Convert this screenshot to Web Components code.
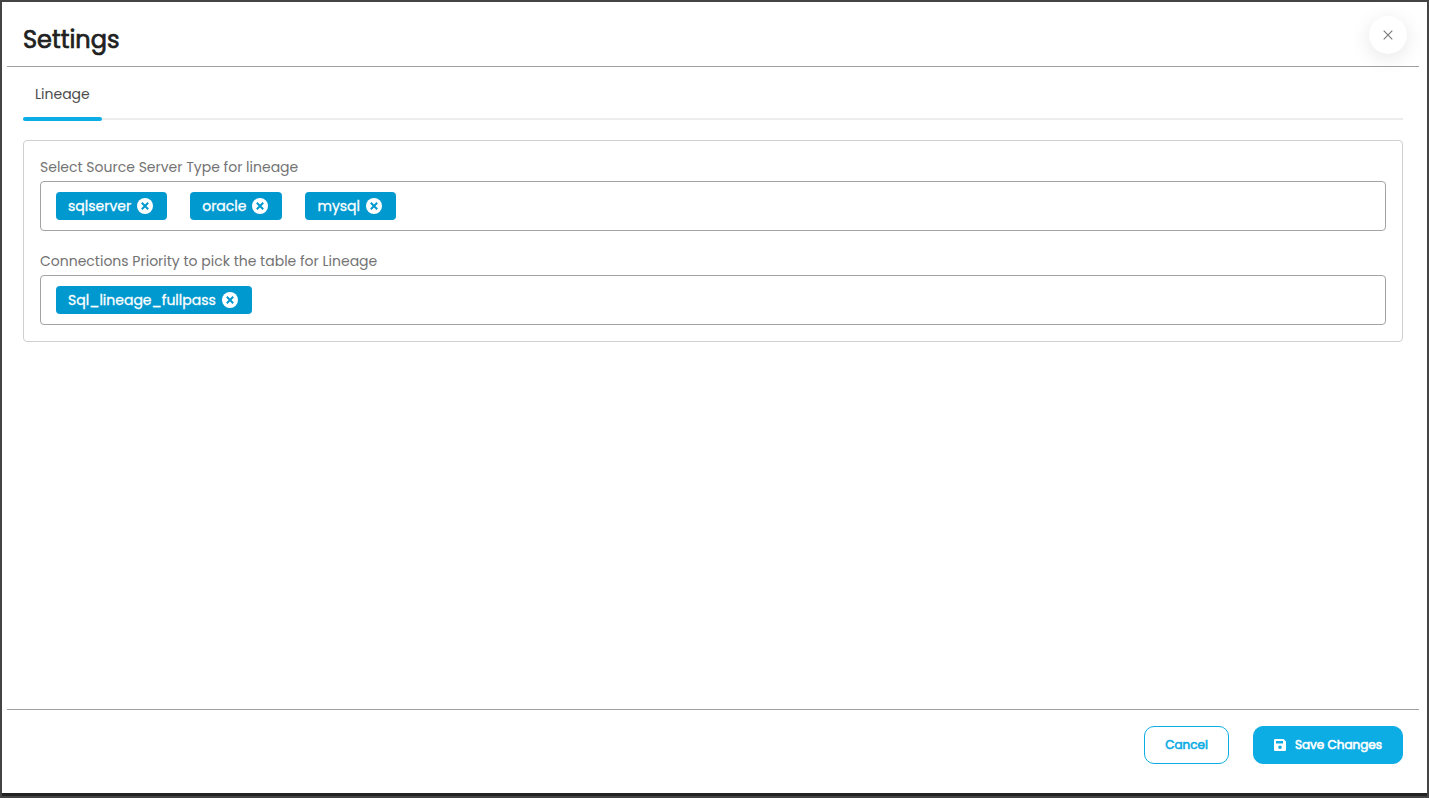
<!DOCTYPE html>
<html lang="en">
<head>
<meta charset="utf-8">
<meta name="viewport" content="width=device-width, initial-scale=1">
<title>Settings</title>
<style>
  html { background: #444; }
  body { margin: 0; font-family: Poppins, Inter, sans-serif; font-size: 14px; line-height: 20px; color: #212121; }
</style>
</head>
<body>
<settings-dialog>
  <span slot="title">Settings</span>
  <settings-tab slot="tabs">Lineage</settings-tab>
  <settings-card>
    <chip-field label="Select Source Server Type for lineage">
      <value-chip>sqlserver</value-chip>
      <value-chip>oracle</value-chip>
      <value-chip>mysql</value-chip>
    </chip-field>
    <chip-field label="Connections Priority to pick the table for Lineage">
      <value-chip>Sql_lineage_fullpass</value-chip>
    </chip-field>
  </settings-card>
  <action-button slot="actions" variant="outline">Cancel</action-button>
  <action-button slot="actions" variant="solid">
    <svg slot="icon" width="12" height="12" viewBox="0 0 12 12" aria-hidden="true"><path fill="currentColor" fill-rule="evenodd" d="M1.3 0H9.500l2.500 2.500v8.200A1.3 1.3 0 0 1 10.700 12H1.300A1.3 1.3 0 0 1 0 10.700V1.300A1.3 1.3 0 0 1 1.300 0ZM2 2v2.500h7V2ZM6 6.400a1.800 1.800 0 1 0 0 3.600 1.800 1.800 0 0 0 0-3.600Z"/></svg>
    Save Changes
  </action-button>
</settings-dialog>

<script>
  const define = (name, html, setup) => {
    const template = document.createElement('template');
    template.innerHTML = html;
    customElements.define(name, class extends HTMLElement {
      constructor() {
        super();
        this.attachShadow({ mode: 'open' }).append(template.content.cloneNode(true));
      }
      connectedCallback() {
        if (setup) setup(this, this.shadowRoot);
      }
    });
  };

  define('settings-dialog', `
    <style>
      :host { display: flex; box-sizing: border-box; min-height: 100vh; border: 2px solid #444; background: #222; padding-bottom: 3px; }
      section { flex: 1; min-width: 0; display: flex; flex-direction: column; background: #fff; padding: 0 8px 0 5px; }
      header { display: flex; justify-content: space-between; align-items: center; padding: 14px 12px 12px 16px; border-bottom: 1px solid #a0a0a0; }
      h1 { margin: 0; padding-top: 10px; font-size: 24px; line-height: 28px; font-weight: 400; -webkit-text-stroke: .03em; }
      .close { width: 38px; height: 38px; padding: 0; border: 0; border-radius: 50%; background: #fff; color: #777; display: grid; place-items: center; box-shadow: 0 4px 20px rgba(0, 0, 0, .1); cursor: pointer; }
      main { flex: 1; padding: 0 16px; }
      nav { position: relative; display: flex; margin-bottom: 19px; }
      nav::before { content: ""; position: absolute; left: 0; right: 0; bottom: 1px; height: 2px; background: #ececec; }
      footer { display: flex; justify-content: flex-end; gap: 24px; padding: 16px 16px 29px; border-top: 1px solid #a0a0a0; }
    </style>
    <section role="dialog" aria-labelledby="title">
      <header>
        <h1 id="title"><slot name="title"></slot></h1>
        <button class="close" type="button" aria-label="Close">
          <svg width="10" height="10" viewBox="0 0 10 10" fill="none" stroke="currentColor" stroke-width="1.1"><path d="M.7.7l8.600 8.600M9.300.7L.7 9.300"/></svg>
        </button>
      </header>
      <main>
        <nav role="tablist"><slot name="tabs"></slot></nav>
        <slot></slot>
      </main>
      <footer><slot name="actions"></slot></footer>
    </section>`);

  define('settings-tab', `
    <style>
      :host { display: block; position: relative; }
      button { display: block; font: inherit; color: #4c4c4c; background: none; border: 0; padding: 17px 12px 17px; cursor: pointer; }
      button::after { content: ""; position: absolute; left: 0; right: 0; bottom: 0; height: 4px; border-radius: 2px; background: #0cace4; }
    </style>
    <button type="button" role="tab" aria-selected="true"><slot></slot></button>`);

  define('settings-card', `
    <style>
      :host { display: flex; flex-direction: column; gap: 20px; padding: 16px; border: 1px solid #d0d0d0; border-radius: 4px; }
    </style>
    <slot></slot>`);

  define('chip-field', `
    <style>
      :host { display: block; }
      .label { margin-bottom: 4px; color: #737373; }
      .box { display: flex; flex-wrap: wrap; gap: 10px 23px; padding: 10px 15px; border: 1px solid #a3a3a3; border-radius: 4px; }
    </style>
    <div class="label" id="label"></div>
    <div class="box" role="group" aria-labelledby="label"><slot></slot></div>`,
    (host, root) => { root.getElementById('label').textContent = host.getAttribute('label'); });

  define('value-chip', `
    <style>
      :host { display: flex; align-items: center; gap: 6px; padding: 4px 14px 4px 12px; border-radius: 4px; background: #0099cf; color: #fff; -webkit-text-stroke: .02em; }
      button { display: block; width: 16px; height: 16px; padding: 0; border: 0; background: none; color: #fff; cursor: pointer; }
      svg { display: block; }
    </style>
    <slot></slot>
    <button type="button" aria-label="Remove">
      <svg width="16" height="16" viewBox="0 0 16 16"><circle cx="8" cy="8" r="8" fill="currentColor"/><path d="M4.800 4.800l6.400 6.400M11.200 4.800l-6.400 6.400" stroke="#0099cf" stroke-width="2"/></svg>
    </button>`);

  define('action-button', `
    <style>
      :host { display: block; }
      button { display: flex; align-items: center; gap: 9px; font: inherit; font-size: 12px; line-height: 20px; -webkit-text-stroke: .05em; padding: 8px 20px; border: 1px solid #0cace4; border-radius: 10px; background: #fff; color: #0cace4; cursor: pointer; }
      :host([variant="solid"]) button { background: #0cace4; color: #fff; }
    </style>
    <button type="button"><slot name="icon"></slot><span><slot></slot></span></button>`);
</script>
</body>
</html>
